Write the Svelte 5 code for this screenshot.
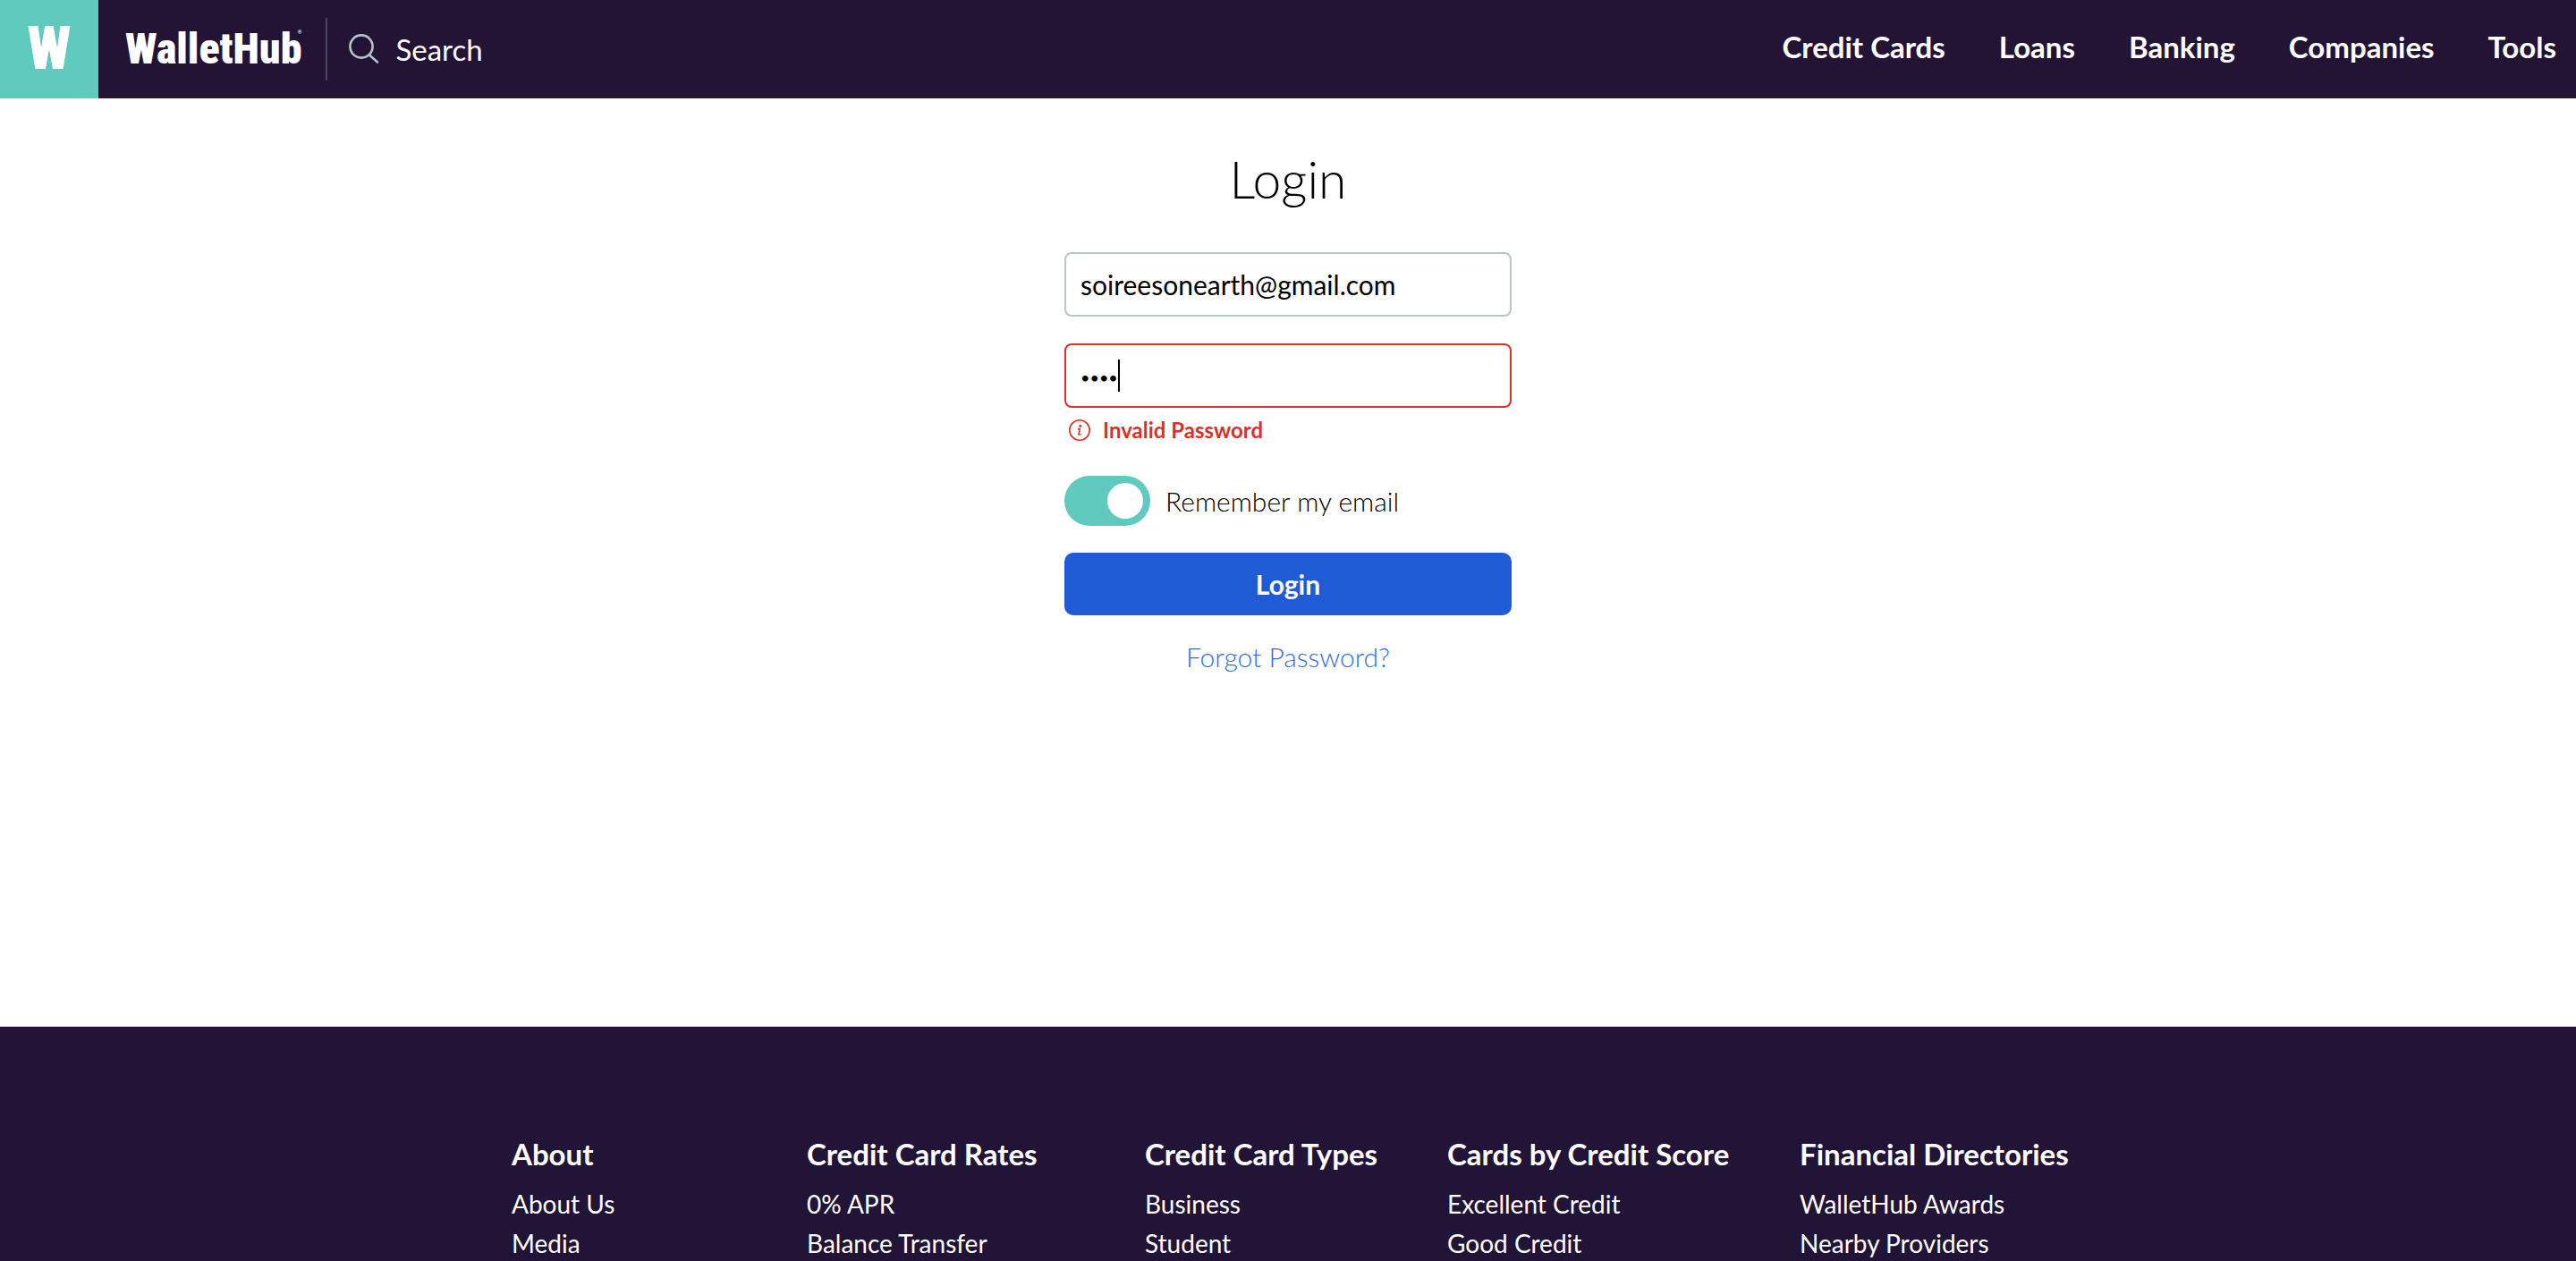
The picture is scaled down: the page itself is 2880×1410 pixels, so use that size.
<script>
  let email = $state('soireesonearth@gmail.com');
  let password = $state('1234');
  let remember = $state(true);

  const nav = ['Credit Cards', 'Loans', 'Banking', 'Companies', 'Tools'];
  const columns = [
    { title: 'About', links: ['About Us', 'Media'] },
    { title: 'Credit Card Rates', links: ['0% APR', 'Balance Transfer'] },
    { title: 'Credit Card Types', links: ['Business', 'Student'] },
    { title: 'Cards by Credit Score', links: ['Excellent Credit', 'Good Credit'] },
    { title: 'Financial Directories', links: ['WalletHub Awards', 'Nearby Providers'] }
  ];
</script>

<div class="page">
  <header>
    <a class="mark" href="#home" aria-label="Home">W</a>
    <a class="wordmark" href="#home">WalletHub<sup>®</sup></a>
    <button class="search" type="button">
      <svg viewBox="0 0 34 34" aria-hidden="true">
        <circle cx="14" cy="14" r="12.6" />
        <path d="M23 23.5 L32 31.5" />
      </svg>
      Search
    </button>
    <nav>
      {#each nav as item}
        <a href="#{item}">{item}</a>
      {/each}
    </nav>
  </header>

  <main>
    <h1>Login</h1>
    <form onsubmit={(e) => e.preventDefault()}>
      <input class="field" type="email" aria-label="Email" bind:value={email} />
      <div class="password">
        <input
          class="field invalid"
          type="password"
          aria-label="Password"
          aria-invalid="true"
          aria-describedby="password-error"
          bind:value={password}
        />
        <span class="caret"></span>
      </div>
      <p class="error" id="password-error">
        <svg viewBox="0 0 24 24" aria-hidden="true">
          <circle cx="12" cy="12" r="11.2" />
          <path class="stem" d="M9.8 10.6 H12.2 L11 16.8 H13.6" />
          <circle class="dot" cx="12.8" cy="7.2" r="1.5" />
        </svg>
        Invalid Password
      </p>
      <label class="remember">
        <input type="checkbox" role="switch" bind:checked={remember} />
        Remember my email
      </label>
      <button class="submit" type="submit">Login</button>
      <a class="forgot" href="#forgot">Forgot Password?</a>
    </form>
  </main>

  <footer>
    <div class="columns">
      {#each columns as column}
        <section>
          <h2>{column.title}</h2>
          <ul>
            {#each column.links as link}
              <li><a href="#{link}">{link}</a></li>
            {/each}
          </ul>
        </section>
      {/each}
    </div>
  </footer>
</div>

<style>
  :global(body) {
    background: #fff;
    overflow: hidden;
  }
  .page {
    min-height: 100vh;
    display: flex;
    flex-direction: column;
    font-family: Lato, 'Open Sans', sans-serif;
    font-variant-ligatures: none;
    font-size: 30px;
    color: #000;
  }
  a {
    color: inherit;
    text-decoration: none;
  }
  button,
  input {
    font: inherit;
    box-sizing: border-box;
    margin: 0;
  }

  header {
    display: flex;
    align-items: center;
    height: 110px;
    background: #231436;
    color: #fff;
  }
  .mark {
    width: 110px;
    line-height: 110px;
    background: #5fcabd;
    text-align: center;
    font-family: 'Roboto Condensed', Roboto, sans-serif;
    font-weight: 900;
    font-size: 66px;
  }
  .wordmark {
    position: relative;
    margin-left: 30px;
    font-family: 'Roboto Condensed', Roboto, sans-serif;
    font-weight: 900;
    font-size: 48px;
    line-height: 72px;
  }
  .wordmark sup {
    position: absolute;
    top: 14px;
    right: 0;
    font-size: 6px;
    line-height: 6px;
  }
  .search {
    display: flex;
    align-items: center;
    gap: 18px;
    height: 70px;
    margin-left: 27px;
    padding: 0 24px;
    border: 0;
    border-left: 2px solid #474556;
    background: none;
    color: #fff;
    font-size: 33px;
  }
  .search svg {
    width: 34px;
    height: 34px;
    fill: none;
    stroke: #b7c3c9;
    stroke-width: 2.6;
    stroke-linecap: round;
  }
  nav {
    display: flex;
    gap: 60px;
    margin-left: auto;
    padding: 0 22px 6px 0;
    font-weight: 700;
    font-size: 33px;
  }

  main {
    flex: 1 0 1038px;
    box-sizing: border-box;
    padding-top: 56px;
  }
  h1 {
    margin: 0 0 48px;
    text-align: center;
    font-weight: 300;
    font-size: 57px;
    line-height: 68px;
  }
  form {
    width: 500px;
    margin: 0 auto;
    display: flex;
    flex-direction: column;
  }
  .field {
    width: 100%;
    height: 72px;
    padding: 0 16px;
    border: 2px solid #b8c4ca;
    border-radius: 8px;
    background: #fff;
    color: #000;
    outline: 0;
  }
  .password {
    position: relative;
    margin-top: 30px;
  }
  .password .field {
    display: block;
    padding-top: 4px;
    font-size: 18px;
    caret-color: transparent;
  }
  .field.invalid {
    border-color: #dc3027;
  }
  .caret {
    position: absolute;
    left: 60px;
    top: 18px;
    width: 2px;
    height: 36px;
    background: #000;
  }
  .error {
    display: flex;
    align-items: center;
    gap: 14px;
    margin: 8px 0 0 5px;
    color: #dc3027;
    font-weight: 700;
    font-size: 24px;
    line-height: 34px;
  }
  .error svg {
    width: 24px;
    height: 24px;
    fill: none;
    stroke: #dc3027;
    stroke-width: 1.6;
  }
  .error .dot {
    fill: #dc3027;
    stroke: none;
  }
  .remember {
    display: flex;
    align-items: center;
    gap: 17px;
    margin-top: 34px;
    font-weight: 300;
  }
  .remember input {
    appearance: none;
    display: flex;
    width: 96px;
    height: 56px;
    padding: 8px;
    border-radius: 28px;
    background: #b8c4ca;
  }
  .remember input::before {
    content: '';
    width: 40px;
    height: 40px;
    border-radius: 50%;
    background: #fff;
  }
  .remember input:checked {
    justify-content: flex-end;
    background: #5fcabd;
  }
  .submit {
    height: 70px;
    margin-top: 30px;
    padding: 0;
    border: 0;
    border-radius: 10px;
    background: #205bd6;
    color: #fff;
    font-weight: 700;
  }
  .forgot {
    align-self: center;
    margin-top: 28px;
    color: #2f6fe4;
    font-weight: 300;
    line-height: 36px;
  }

  footer {
    flex-shrink: 0;
    height: 262px;
    overflow: hidden;
    background: #211436;
    color: #fff;
  }
  .columns {
    display: grid;
    grid-template-columns: 330px 378px 338px 394px 296px;
    justify-content: center;
    padding-top: 120px;
  }
  h2 {
    margin: 0 0 12px;
    font-weight: 700;
    font-size: 33px;
    line-height: 44px;
    white-space: nowrap;
  }
  ul {
    margin: 0;
    padding: 0;
    list-style: none;
    font-size: 28px;
    line-height: 44px;
  }
</style>
